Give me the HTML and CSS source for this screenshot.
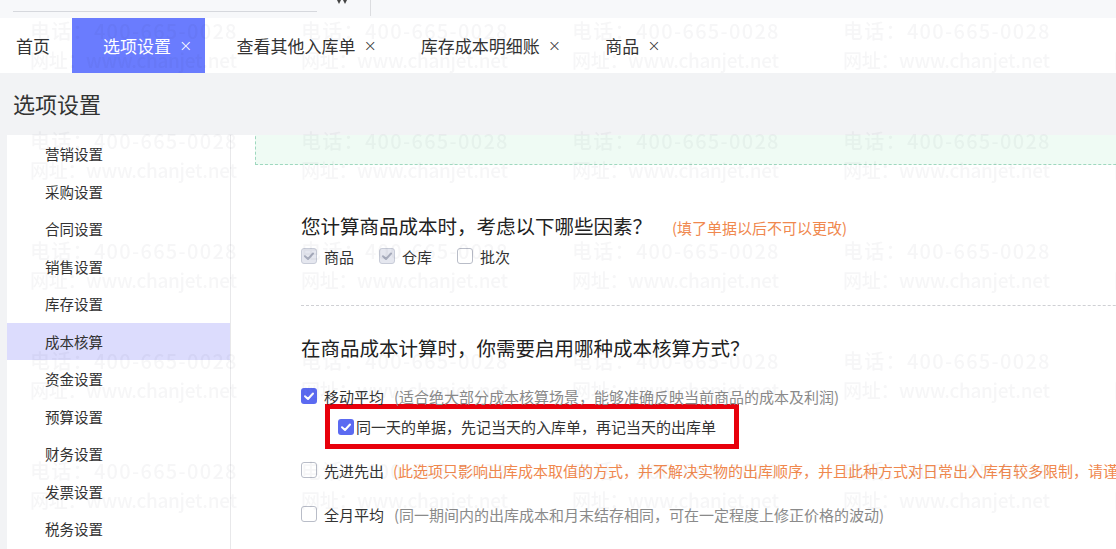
FILE: index.html
```html
<!DOCTYPE html>
<html lang="zh-CN">
<head>
  <meta charset="UTF-8">
  <meta name="viewport" content="width=device-width, initial-scale=1.0">
  <title>选项设置</title>
  <link rel="stylesheet" href="styles.css">
</head>
<body>
  <div class="top-strip">
    <div class="strip-line"></div>
    <svg class="strip-icon" width="12" height="6" viewBox="0 0 12 6"><path d="M1 0 L3 4 L5 0 Z M7 0 L9 4 L11 0 Z" fill="#444"/></svg>
    <div class="strip-sep"></div>
  </div>

  <div class="tabs">
    <div class="tab tab-home">首页</div>
    <div class="tab tab-active">选项设置<span class="tab-close">×</span></div>
    <div class="tab">查看其他入库单<span class="tab-close">×</span></div>
    <div class="tab">库存成本明细账<span class="tab-close">×</span></div>
    <div class="tab">商品<span class="tab-close">×</span></div>
  </div>

  <div class="page-title">选项设置</div>

  <div class="page-body">
    <ul class="side-menu">
      <li class="menu-item">营销设置</li>
      <li class="menu-item">采购设置</li>
      <li class="menu-item">合同设置</li>
      <li class="menu-item">销售设置</li>
      <li class="menu-item">库存设置</li>
      <li class="menu-item menu-active">成本核算</li>
      <li class="menu-item">资金设置</li>
      <li class="menu-item">预算设置</li>
      <li class="menu-item">财务设置</li>
      <li class="menu-item">发票设置</li>
      <li class="menu-item">税务设置</li>
    </ul>

    <div class="main">
      <div class="main-inner">
        <div class="tip-box"></div>

        <div class="section section-first">
          <div class="question">您计算商品成本时，考虑以下哪些因素？<span class="note-orange note-q">(填了单据以后不可以更改)</span></div>
          <div class="factor-row">
            <span class="option">
              <span class="cb cb-disabled"><svg viewBox="0 0 16 16"><polyline points="4,8.2 7,11 12,5.5"/></svg></span>
              <span class="label">商品</span>
            </span>
            <span class="option">
              <span class="cb cb-disabled"><svg viewBox="0 0 16 16"><polyline points="4,8.2 7,11 12,5.5"/></svg></span>
              <span class="label">仓库</span>
            </span>
            <span class="option">
              <span class="cb"></span>
              <span class="label">批次</span>
            </span>
          </div>
        </div>

        <div class="section">
          <div class="question">在商品成本计算时，你需要启用哪种成本核算方式？</div>
          <div class="method-row row-avg">
            <span class="cb cb-checked"><svg viewBox="0 0 16 16"><polyline points="4,8.2 7,11 12,5.5"/></svg></span>
            <span class="label">移动平均</span>
            <span class="note-gray">(适合绝大部分成本核算场景，能够准确反映当前商品的成本及利润)</span>
          </div>
          <div class="highlight">
            <span class="cb cb-checked"><svg viewBox="0 0 16 16"><polyline points="4,8.2 7,11 12,5.5"/></svg></span>
            <span class="label label-tight">同一天的单据，先记当天的入库单，再记当天的出库单</span>
          </div>
          <div class="method-row row-fifo">
            <span class="cb"></span>
            <span class="label">先进先出</span>
            <span class="note-orange">(此选项只影响出库成本取值的方式，并不解决实物的出库顺序，并且此种方式对日常出入库有较多限制，请谨慎选择)</span>
          </div>
          <div class="method-row row-month">
            <span class="cb"></span>
            <span class="label">全月平均</span>
            <span class="note-gray">(同一期间内的出库成本和月末结存相同，可在一定程度上修正价格的波动)</span>
          </div>
        </div>
      </div>
    </div>
  </div>

  <div class="watermark"></div>

  <script>
    // 水印
    var wm = document.querySelector('.watermark')
    var html = ''
    for (var i = 0; i < 25; i++) {
      html += '<div class="wm-tile"><div class="wm-tel">电话：400-665-0028</div><div class="wm-site">网址：www.chanjet.net</div></div>'
    }
    wm.innerHTML = html
  </script>
</body>
</html>
```

FILE: styles.css
```css
* {
  box-sizing: border-box;
}

body {
  margin: 0;
  padding: 0;
  height: 549px;
  overflow: hidden;
  font-family: "Noto Sans CJK SC", "Noto Sans", sans-serif;
  color: #333;
  background-color: #f2f3f5;
}

ul {
  margin: 0;
  padding: 0;
  list-style: none;
}

/* 顶部残留条 */
.top-strip {
  display: flex;
  align-items: flex-start;
  height: 18px;
  background-color: #f7f8fa;
}

.strip-line {
  width: 304px;
  height: 12px;
  margin-left: 13px;
  border-bottom: 1px solid #d6d8dd;
}

.strip-icon {
  display: block;
  margin-left: 19px;
}

.strip-sep {
  width: 1px;
  height: 16px;
  margin-left: 22px;
  background-color: #dcdde0;
}

/* 标签页 */
.tabs {
  display: flex;
  height: 55px;
  background-color: #fff;
}

.tab {
  display: flex;
  align-items: center;
  padding: 0 13px 0 31px;
  font-size: 17px;
  color: #333;
}

.tab-home {
  padding: 0 22px 0 16px;
}

.tab-active {
  background-color: #6a7cfe;
  color: #fff;
}

.tab-close {
  margin-left: 8px;
  font-family: "DejaVu Sans", sans-serif;
  font-size: 16px;
  font-weight: 300;
}

.page-title {
  height: 62px;
  padding-left: 13px;
  line-height: 60px;
  font-size: 22px;
  color: #333;
}

/* 主体 */
.page-body {
  display: flex;
  height: 414px;
}

.side-menu {
  width: 224px;
  margin-left: 7px;
  background-color: #fff;
  border-right: 1px solid #e8e8ea;
}

.menu-item {
  height: 37.5px;
  line-height: 37.5px;
  padding-left: 38px;
  font-size: 14.5px;
  color: #333;
}

.menu-active {
  background-color: #dcdcfd;
}

.main {
  flex: 1;
  overflow: hidden;
  background-color: #fff;
}

.main-inner {
  width: 1000px;
  padding-left: 24px;
  white-space: nowrap;
}

.tip-box {
  height: 70px;
  margin-top: -40px;
  background-color: #effbf4;
  border: 1px dashed #9fd8bf;
  border-width: 0 0 1.5px 1.5px;
}

.section {
  margin-left: 46px;
}

.section-first {
  margin-top: 47px;
  padding-bottom: 38px;
  border-bottom: 1px dashed #cfd0d4;
}

.question {
  height: 28px;
  line-height: 28px;
  font-size: 19.5px;
  color: #222;
}

.section-first .question {
  margin-bottom: 5px;
}

.section + .section .question {
  margin-top: 28px;
  margin-bottom: 24px;
}

.note-q {
  margin-left: 20px;
  font-size: 15px;
}

.factor-row {
  display: flex;
  height: 22px;
  align-items: center;
  gap: 25px;
}

.option {
  display: flex;
  align-items: center;
}

/* 复选框 */
.cb {
  display: inline-block;
  flex: none;
  width: 16px;
  height: 16px;
  border: 1px solid #b9bdc8;
  border-radius: 3px;
  background-color: #fff;
}

.cb svg {
  display: block;
  width: 100%;
  height: 100%;
  fill: none;
  stroke-width: 2;
  stroke-linecap: round;
  stroke-linejoin: round;
}

.cb-checked {
  border: 0;
  background-color: #5b6af1;
}

.cb-checked svg {
  stroke: #fff;
}

.cb-disabled {
  border-color: #c8ccd8;
  background-color: #e5e7ef;
}

.cb-disabled svg {
  stroke: #a7acbc;
  margin: -1px;
  width: 16px;
  height: 16px;
}

.label {
  margin-left: 7px;
  font-size: 15px;
  color: #333;
}

.label-tight {
  margin-left: 2px;
}

.method-row {
  display: flex;
  align-items: center;
  height: 20px;
}

.note-gray {
  margin-left: 10px;
  font-size: 15px;
  color: #8a8a8a;
}

.note-orange {
  font-size: 15px;
  color: #f0884e;
}

.method-row .note-orange {
  margin-left: 9px;
}

.highlight {
  display: flex;
  align-items: center;
  width: 414px;
  height: 45px;
  margin: -2px 0 0 24px;
  padding-left: 8px;
  border: 5px solid #e8000b;
}

.row-fifo {
  margin-top: 11px;
}

.row-month {
  margin-top: 24px;
}

/* 水印 */
.watermark {
  position: fixed;
  top: 0;
  left: 0;
  width: 1116px;
  height: 549px;
  overflow: hidden;
  pointer-events: none;
  display: grid;
  grid-template-columns: repeat(5, 271px);
  grid-auto-rows: 110px;
  padding: 16px 0 0 30px;
}

.wm-tile {
  font-size: 20px;
  line-height: 29px;
  font-weight: 500;
  color: rgba(40, 40, 60, 0.045);
  white-space: nowrap;
}

.wm-tel {
  letter-spacing: 1.3px;
}

.wm-site {
  font-size: 19px;
  letter-spacing: -0.3px;
}
```
